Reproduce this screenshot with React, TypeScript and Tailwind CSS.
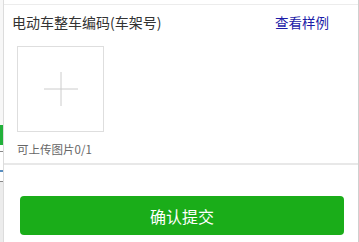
const font = { fontFamily: '"Noto Sans CJK SC", "Noto Sans", sans-serif' };

export default function App() {
  return (
    <div className="flex h-[242px] w-[359px] overflow-hidden bg-white" style={font}>
      {/* page underneath, peeking at left edge */}
      <div className="flex w-[3px] shrink-0 flex-col bg-[#f4f4f4]">
        <div className="h-[125px] bg-[#f7f7f7]" />
        <div className="h-[20px] bg-[#22b03a]" />
        <div className="h-[6px] bg-white" />
        <div className="h-px bg-[#888]" />
        <div className="h-[18px] bg-white" />
        <div className="h-[2px] bg-[#5a8fc0]" />
        <div className="h-[9px] bg-white" />
        <div className="h-px bg-[#888]" />
        <div className="flex-1 bg-[#ececec]" />
      </div>

      <div className="flex min-w-0 flex-1 flex-col border-x border-l-[#dcdcdc] border-r-[#cfcfcf]">
        <div className="mt-[4px] h-px bg-[#ececec]" />
        <div className="flex h-[35px] items-center justify-between pl-[8px] pr-[29px]">
          <span className="text-[14px] text-[#333]">电动车整车编码(车架号)</span>
          <span className="text-[13.5px] text-[#1c1ca8]">查看样例</span>
        </div>

        <div className="pl-[13px] pt-[6px]">
          <div className="flex h-[86px] w-[87px] items-center justify-center border border-[#dedede]">
            <svg width="34" height="34" viewBox="0 0 34 34" className="text-[#cccccc]">
              <path d="M17 0V34M0 17H34" stroke="currentColor" strokeWidth="1" fill="none" />
            </svg>
          </div>
          <div className="mt-[9px] text-[11.5px] leading-[16px] text-[#666]">可上传图片0/1</div>
        </div>

        <div className="mt-[6px] h-[2px] bg-[#e8e8e8]" />

        <div className="flex-1 pl-[16px] pr-[14px] pt-[31px]">
          <button className="flex h-[39px] w-full items-center justify-center rounded-[4px] bg-[#1aad19] text-[16px] text-white">
            确认提交
          </button>
        </div>
      </div>
    </div>
  );
}
